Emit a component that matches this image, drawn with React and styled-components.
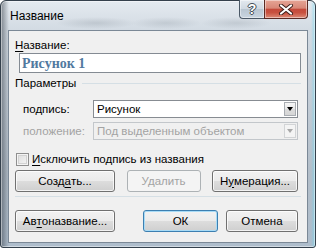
import React from 'react';
import styled, { createGlobalStyle, css } from 'styled-components';

const GlobalStyle = createGlobalStyle`
  html, body {
    margin: 0;
    padding: 0;
    background: #ffffff;
  }
  body {
    font-family: "Liberation Sans", "Noto Sans", sans-serif;
    font-size: 11.5px;
    line-height: 15px;
    color: #000;
  }
`;

const Window = styled.div`
  box-sizing: border-box;
  width: 316px;
  height: 248px;
  display: flex;
  flex-direction: column;
  padding: 0 7px 4px 7px;
  border: 1px solid #34404c;
  border-radius: 6px 6px 3px 3px;
  background:
    linear-gradient(to right, rgba(40, 48, 58, 0.5) 0, rgba(40, 48, 58, 0) 8px),
    linear-gradient(to left, rgba(110, 215, 240, 0.55) 0, rgba(110, 215, 240, 0) 4px),
    radial-gradient(ellipse 40px 6px at 95px 22px, rgba(120, 130, 140, 0.25), rgba(120, 130, 140, 0)),
    radial-gradient(ellipse 35px 6px at 165px 22px, rgba(120, 130, 140, 0.22), rgba(120, 130, 140, 0)),
    radial-gradient(ellipse 35px 6px at 235px 22px, rgba(120, 130, 140, 0.22), rgba(120, 130, 140, 0)),
    linear-gradient(to bottom, #e4eaf0 0, #d3dbe3 28px, #b3bec9 70%, #aebdcc 100%);
  box-shadow: inset 0 0 0 1px rgba(255, 255, 255, 0.45);
`;

const TitleBar = styled.div`
  height: 29px;
  display: flex;
  align-items: flex-start;
`;

const Title = styled.div`
  margin: 8px 0 0 2px;
  font-size: 12px;
  color: #000;
`;

const Controls = styled.div`
  margin-left: auto;
  margin-top: -1px;
  display: flex;
`;

const CaptionButton = styled.div`
  box-sizing: border-box;
  height: 19px;
  display: flex;
  align-items: center;
  justify-content: center;
  border: 1px solid #4a5866;
  border-top: none;
  box-shadow: inset 0 0 0 1px rgba(255, 255, 255, 0.45);
`;

const HelpButton = styled(CaptionButton)`
  width: 25px;
  border-right: none;
  border-radius: 0 0 0 4px;
  background: linear-gradient(to bottom, #e3e9ef 0, #d0d9e2 48%, #b9c6d2 52%, #c9d5e0 100%);
  color: #fff;
  font-family: "Liberation Sans", sans-serif;
  font-weight: bold;
  font-size: 14px;
  text-shadow: 0 0 1px #2c3640, 1px 0 0 #4a5560, -1px 0 0 #4a5560, 0 1px 0 #4a5560, 0 -1px 0 #4a5560;
`;

const CloseButton = styled(CaptionButton)`
  width: 44px;
  border-radius: 0 0 4px 0;
  border-color: #5a2a24;
  background: linear-gradient(to bottom, #e6a596 0, #d88878 45%, #c44a3b 52%, #c8513f 70%, #dc8a76 100%);
`;

const Client = styled.div`
  flex: 1;
  display: flex;
  flex-direction: column;
  padding: 0 6px;
  background: #f0f0f0;
  border: 1px solid #7b8896;
`;

const Key = styled.span`
  text-decoration: underline;
  text-underline-offset: 2px;
`;

const Label = styled.div`
  margin-top: 7px;
`;

const TextBox = styled.div`
  box-sizing: border-box;
  height: 20px;
  margin-left: 4px;
  padding: 0 2px;
  display: flex;
  align-items: center;
  background: #fff;
  border: 1px solid #848b93;
  font-family: "Liberation Serif", serif;
  font-weight: bold;
  font-size: 14px;
  color: #52799f;
`;

const GroupHeader = styled.div`
  margin-top: 3px;
  display: flex;
  align-items: center;
`;

const Rule = styled.div`
  flex: 1;
  height: 1px;
  margin-left: ${p => p.$indent || 0}px;
  background: #d5dfe5;
`;

const FieldRow = styled.div`
  display: flex;
  align-items: center;
  margin-top: ${p => p.$top}px;
  padding-left: 8px;
`;

const FieldLabel = styled.div`
  width: 70px;
  color: ${p => (p.$disabled ? '#a3a3a3' : '#000')};
`;

const Combo = styled.div`
  box-sizing: border-box;
  flex: 1;
  height: 18px;
  margin-right: 3px;
  display: flex;
  align-items: center;
  padding-left: 3px;
  background: ${p => (p.$disabled ? '#f0f0f0' : '#fff')};
  border: 1px solid ${p => (p.$disabled ? '#c3c7cb' : '#878c92')};
  color: ${p => (p.$disabled ? '#a3a3a3' : '#000')};
`;

const ComboText = styled.div`
  flex: 1;
  white-space: nowrap;
  overflow: hidden;
`;

const ArrowBox = styled.div`
  box-sizing: border-box;
  width: 12px;
  height: 14px;
  margin-right: 1px;
  display: flex;
  align-items: center;
  justify-content: center;
  border: 1px solid ${p => (p.$disabled ? '#d2d4d6' : '#a9adb2')};
  background: ${p => (p.$disabled
    ? '#f4f4f4'
    : 'linear-gradient(to bottom, #f6f6f6 0, #e9e9e9 50%, #dcdcdc 50%, #d6d6d6 100%)')};

  &::after {
    content: '';
    border-left: 3.5px solid transparent;
    border-right: 3.5px solid transparent;
    border-top: 4px solid ${p => (p.$disabled ? '#a8a8a8' : '#000')};
  }
`;

const CheckRow = styled.div`
  margin-top: 12px;
  display: flex;
  align-items: center;
  gap: 3px;
`;

const CheckBox = styled.div`
  box-sizing: border-box;
  width: 13px;
  height: 13px;
  margin-left: 1px;
  border: 1px solid #8f8f8f;
  background: linear-gradient(135deg, #dcdcdc 0, #f6f6f6 100%);
  box-shadow: inset 0 0 0 1px #f4f4f4, inset 0 0 0 2px #d2d2d2;
`;

const ButtonRow = styled.div`
  display: flex;
  align-items: center;
  gap: ${p => p.$gap || 0}px;
  justify-content: ${p => p.$spread ? 'space-between' : 'flex-start'};
  margin-top: ${p => p.$top}px;
  margin-right: 3px;
`;

const Spacer = styled.div`
  flex: 1;
`;

const Button = styled.div`
  box-sizing: border-box;
  width: ${p => p.$w}px;
  height: 22px;
  display: flex;
  align-items: center;
  justify-content: center;
  border: 1px solid #707070;
  border-radius: 3px;
  background: linear-gradient(to bottom, #f2f2f2 0, #ebebeb 50%, #dddddd 50%, #cfcfcf 100%);
  box-shadow: inset 0 0 0 1px rgba(255, 255, 255, 0.75);
  color: #000;
  white-space: nowrap;

  ${p => p.$default && css`
    border-color: #3c7fb1;
    box-shadow: inset 0 0 0 1px #a8dbf6;
  `}

  ${p => p.$disabled && css`
    border-color: #adb2b5;
    background: #f4f4f4;
    box-shadow: none;
    color: #a3a3a3;
  `}
`;

const Separator = styled.div`
  height: 1px;
  margin-top: 4px;
  background: #d5dfe5;
`;

const CloseGlyph = () => (
  <svg width="16" height="11" viewBox="0 0 16 11">
    <path d="M3 1.5 L13 9.5 M13 1.5 L3 9.5" stroke="#3b1d18" strokeWidth="4" strokeLinecap="round" />
    <path d="M3 1.5 L13 9.5 M13 1.5 L3 9.5" stroke="#ffffff" strokeWidth="2.2" strokeLinecap="round" />
  </svg>
);

export default function App() {
  return (
    <>
      <GlobalStyle />
      <Window>
        <TitleBar>
          <Title>Название</Title>
          <Controls>
            <HelpButton>?</HelpButton>
            <CloseButton><CloseGlyph /></CloseButton>
          </Controls>
        </TitleBar>
        <Client>
          <Label><Key>Н</Key>азвание:</Label>
          <TextBox>Рисунок 1</TextBox>
          <GroupHeader>
            Параметры
            <Rule $indent={6} />
          </GroupHeader>
          <FieldRow $top={9}>
            <FieldLabel>по<Key>д</Key>пись:</FieldLabel>
            <Combo>
              <ComboText>Рисунок</ComboText>
              <ArrowBox />
            </Combo>
          </FieldRow>
          <FieldRow $top={4}>
            <FieldLabel $disabled>положение:</FieldLabel>
            <Combo $disabled>
              <ComboText>Под выделенным объектом</ComboText>
              <ArrowBox $disabled />
            </Combo>
          </FieldRow>
          <CheckRow>
            <CheckBox />
            <span><Key>И</Key>сключить подпись из названия</span>
          </CheckRow>
          <ButtonRow $top={3} $spread>
            <Button $w={100}>Созд<Key>а</Key>ть...</Button>
            <Button $w={74} $disabled>Удалить</Button>
            <Button $w={86}>Н<Key>у</Key>мерация...</Button>
          </ButtonRow>
          <Separator />
          <ButtonRow $top={13} $gap={8}>
            <Button $w={100}>Ав<Key>т</Key>оназвание...</Button>
            <Spacer />
            <Button $w={75} $default>ОК</Button>
            <Button $w={72}>Отмена</Button>
          </ButtonRow>
        </Client>
      </Window>
    </>
  );
}
